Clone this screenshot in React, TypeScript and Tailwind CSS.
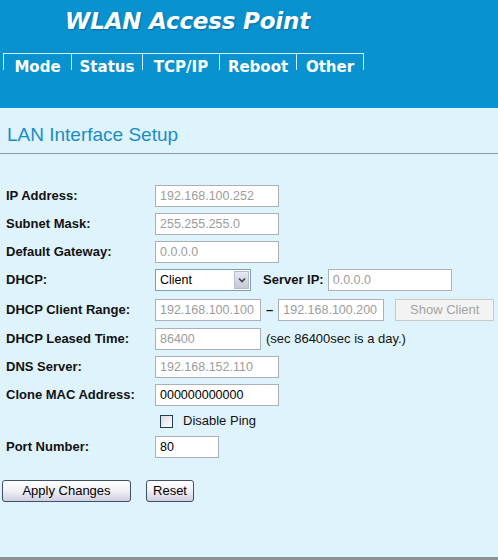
import React from 'react';

const tabs = [
  { label: 'Mode', w: 'w-[68px]' },
  { label: 'Status', w: 'w-[71px]' },
  { label: 'TCP/IP', w: 'w-[77px]' },
  { label: 'Reboot', w: 'w-[77px]' },
  { label: 'Other', w: 'w-[68px]' },
];

const fieldBase =
  'h-[22px] border border-[#a9b0b6] bg-white px-[4px] text-[12.5px] outline-none';

function Field({
  value,
  w = 'w-[124px]',
  muted = true,
}: {
  value: string;
  w?: string;
  muted?: boolean;
}) {
  return (
    <input
      readOnly
      value={value}
      className={`${fieldBase} ${w} ${muted ? 'text-[#9c9c9c]' : 'text-black'}`}
    />
  );
}

function Row({
  label,
  h = 'h-[28px]',
  children,
}: {
  label?: string;
  h?: string;
  children: React.ReactNode;
}) {
  return (
    <div className={`flex items-center ${h}`}>
      <div className="w-[155px] shrink-0 pl-[6px] text-[13px] font-bold text-[#111]">{label}</div>
      <div className="flex items-center">{children}</div>
    </div>
  );
}

function ClientSelect() {
  return (
    <div className="flex h-[22px] w-[96px] items-center border border-[#7f9db9] bg-white">
      <span className="flex-1 pl-[4px] text-[12.5px] text-black">Client</span>
      <span className="mr-[1px] flex h-[18px] w-[15px] items-center justify-center border border-[#b6bccc] bg-gradient-to-b from-[#e6e8f2] to-[#c4c8d8]">
        <svg width="8" height="6" viewBox="0 0 8 6">
          <path d="M1 1.5 L4 4.5 L7 1.5" fill="none" stroke="#3a4254" strokeWidth="1.6" />
        </svg>
      </span>
    </div>
  );
}

function Btn({ children, w }: { children: React.ReactNode; w: string }) {
  return (
    <button className={`h-[22px] ${w} rounded-[3px] border border-[#3d4f6a] bg-gradient-to-b from-white via-[#f0f0f6] to-[#cfcfe0] text-[13px] text-black`}>
      {children}
    </button>
  );
}

export default function App() {
  return (
    <div className="flex h-[560px] w-[498px] flex-col overflow-hidden bg-[#dff3fc] font-['Liberation_Sans',Arial,sans-serif]">
      <header className="h-[108px] shrink-0 bg-[#0893d0]">
        <h1 className="pl-[65px] pt-[7px] font-['DejaVu_Sans',sans-serif] text-[23px] font-bold italic leading-[28px] tracking-[-0.2px] text-white [text-shadow:1px_1px_2px_rgba(0,40,80,0.35)]">
          WLAN Access Point
        </h1>
        <nav className="ml-[3px] mt-[18px] flex">
          {tabs.map((t, i) => (
            <div
              key={t.label}
              className={`flex h-[17px] ${t.w} justify-center border-l border-t border-[#d4ecf7] pt-[6px] font-['DejaVu_Sans',sans-serif] text-[15px] font-bold leading-[15px] text-white ${
                i === tabs.length - 1 ? 'border-r' : ''
              }`}
            >
              {t.label}
            </div>
          ))}
        </nav>
      </header>

      <div className="flex-1 border-b-[3px] border-[#8e9296]">
        <h2 className="border-b border-[#8b9aa8] pb-[7px] pl-[7px] pt-[16px] text-[19px] leading-[22px] text-[#178dc8]">
          LAN Interface Setup
        </h2>

        <div className="mt-[28px]">
          <Row label="IP Address:">
            <Field value="192.168.100.252" />
          </Row>
          <Row label="Subnet Mask:">
            <Field value="255.255.255.0" />
          </Row>
          <Row label="Default Gateway:">
            <Field value="0.0.0.0" />
          </Row>
          <Row label="DHCP:">
            <ClientSelect />
            <span className="ml-[12px] mr-[4px] text-[13px] font-bold text-[#111]">Server IP:</span>
            <Field value="0.0.0.0" />
          </Row>
          <Row label="DHCP Client Range:" h="h-[31px]">
            <Field value="192.168.100.100" w="w-[106px]" />
            <span className="mx-[5px] text-[13px] font-bold text-[#111]">–</span>
            <Field value="192.168.100.200" w="w-[106px]" />
            <button className="ml-[11px] h-[22px] w-[99px] border border-[#c9c9c9] bg-[#f3f3f3] text-[13px] text-[#a3a3a3]">
              Show Client
            </button>
          </Row>
          <Row label="DHCP Leased Time:">
            <Field value="86400" w="w-[106px]" />
            <span className="ml-[5px] text-[13px] text-[#111]">(sec 86400sec is a day.)</span>
          </Row>
          <Row label="DNS Server:">
            <Field value="192.168.152.110" />
          </Row>
          <Row label="Clone MAC Address:">
            <Field value="000000000000" muted={false} />
          </Row>
          <Row h="h-[24px]">
            <span className="ml-[5px] h-[13px] w-[13px] border border-[#1f3d5c] bg-gradient-to-br from-[#dcdcdc] to-white" />
            <span className="ml-[10px] text-[13px] text-[#111]">Disable Ping</span>
          </Row>
          <Row label="Port Number:">
            <Field value="80" w="w-[64px]" muted={false} />
          </Row>
        </div>

        <div className="ml-[2px] mt-[19px] flex gap-[15px]">
          <Btn w="w-[129px]">Apply Changes</Btn>
          <Btn w="w-[48px]">Reset</Btn>
        </div>
      </div>
    </div>
  );
}
